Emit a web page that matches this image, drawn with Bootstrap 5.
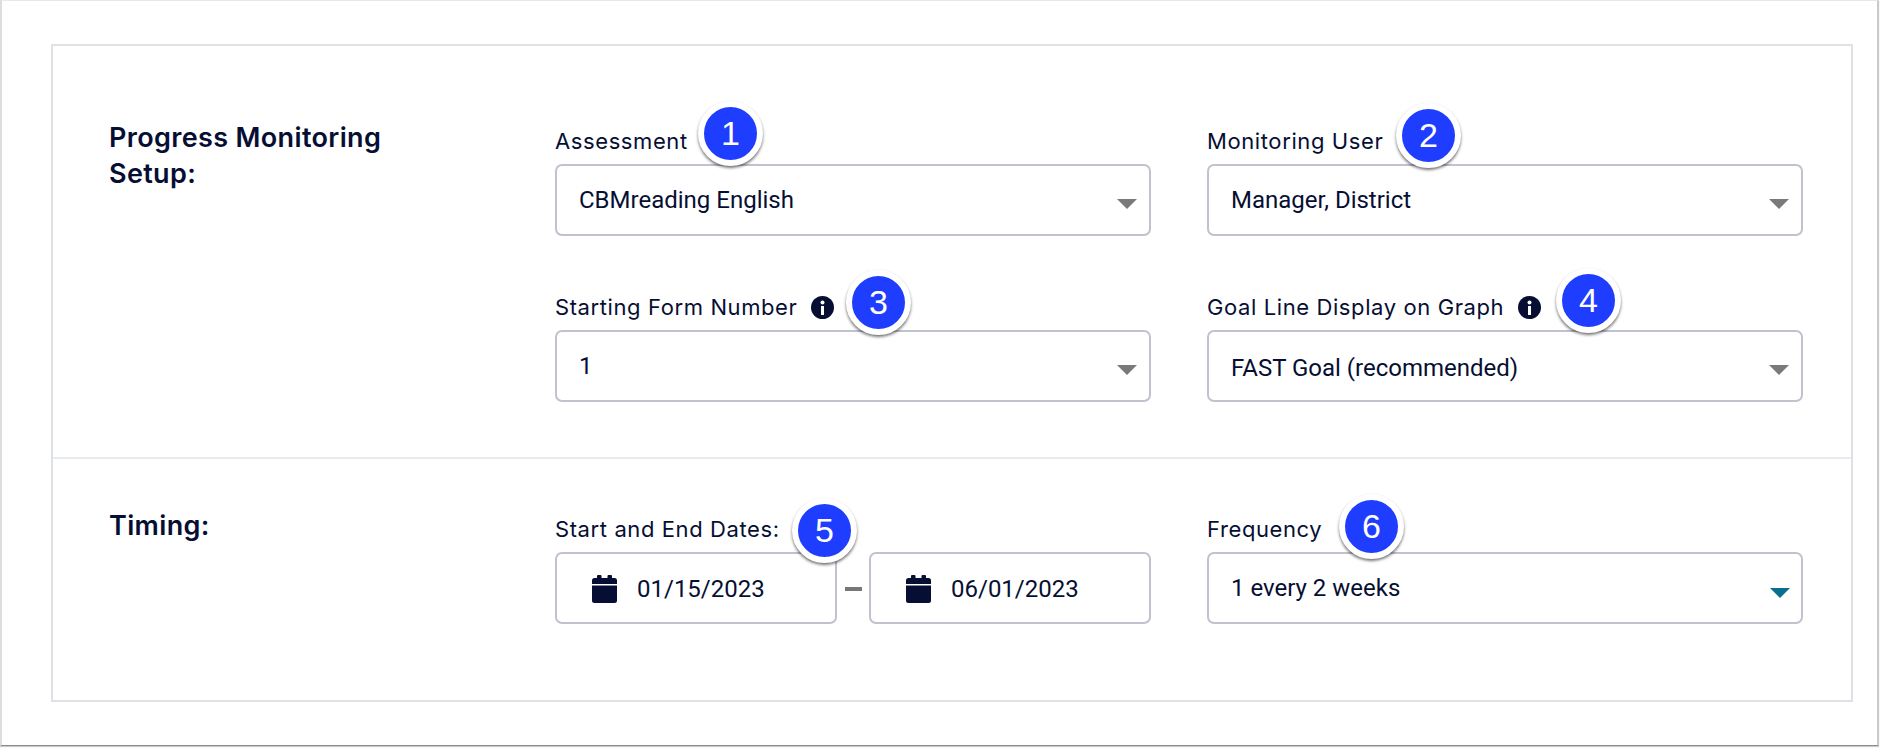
<!doctype html>
<html lang="en">
<head>
<meta charset="utf-8">
<title>Progress Monitoring Setup</title>
<link rel="stylesheet" href="https://cdn.jsdelivr.net/npm/bootstrap@5.3.0/dist/css/bootstrap.min.css">
<style>
html,body{background:#fff;margin:0;height:748px;overflow:hidden}
.pm-page{position:relative;width:1879px;height:746px;background:#fff;border-top:1px solid #e6e8eb;border-left:2px solid #dcdde0;border-right:2px solid #c9cacc;border-bottom:1px solid #8a8a8a;box-shadow:0 1px 1px rgba(0,0,0,.2);padding:43px 24px 0 49px;color:#060f33}
.pm-box{border:2px solid #dee2e6;height:658px;background:#fff}
.pm-sec{display:flex;padding-left:56px;padding-right:48px}
.pm-sec-a{height:413px;padding-top:82px;border-bottom:2px solid #e9ecef}
.pm-sec-b{padding-top:57px}
.pm-title{width:447px;margin:-8px 0 0;font-family:"Inter",sans-serif;font-weight:600;font-size:27px;line-height:36px;letter-spacing:.35px;color:#060f33}
.pm-fields{display:grid;grid-template-columns:596px 596px;column-gap:56px;row-gap:58px;align-self:flex-start}
.pm-lab{font-family:"Inter",sans-serif;font-size:22px;line-height:26px;letter-spacing:.6px;color:#060f33;margin:0 0 10px;display:flex;align-items:center;gap:14px;height:26px}
.pm-sel.form-select,.pm-date.form-control{height:72px;border:2px solid #c0c2d0;border-radius:7px;color:#060f33;font-family:"Roboto",sans-serif;font-size:24px;padding:0 40px 0 22px;box-shadow:none}
.pm-sel.form-select{background-image:url("data:image/svg+xml,%3Csvg xmlns='http://www.w3.org/2000/svg' viewBox='0 0 20 10'%3E%3Cpath fill='%237a7a7a' d='M0 0h20L10 10z'/%3E%3C/svg%3E");background-size:20px 10px;background-position:right 12px top 33px}
.pm-sel.pm-teal{background-image:url("data:image/svg+xml,%3Csvg xmlns='http://www.w3.org/2000/svg' viewBox='0 0 20 10'%3E%3Cpath fill='%230a6f8e' d='M0 0h20L10 10z'/%3E%3C/svg%3E");background-position:right 11px top 34px}
.pm-sel.form-select.pm-low{padding-top:3px}
.pm-range{display:flex;align-items:center}
.pm-date.form-control{width:282px;display:flex;align-items:center;gap:20px;padding:2px 0 0 35px;font-size:24px}
.pm-dash{width:32px;display:flex;justify-content:center;padding-top:2px}
.pm-dash i{display:block;width:17px;height:4px;background:#777}
.pm-dot{position:absolute;width:65px;height:65px;border-radius:50%;background:#1f3dff;border:6px solid #fff;box-shadow:0 2px 3px rgba(0,0,0,.55);color:#fff;font-family:"Liberation Sans",sans-serif;font-size:34px;line-height:53px;text-align:center}
</style>
</head>
<body>
<div class="pm-page">
  <div class="pm-box">
    <section class="pm-sec pm-sec-a">
      <h2 class="pm-title">Progress Monitoring<br>Setup:</h2>
      <div class="pm-fields">
        <div>
          <label class="pm-lab">Assessment</label>
          <select class="form-select pm-sel"><option>CBMreading English</option></select>
        </div>
        <div>
          <label class="pm-lab">Monitoring User</label>
          <select class="form-select pm-sel"><option>Manager, District</option></select>
        </div>
        <div>
          <label class="pm-lab">Starting Form Number
            <svg width="23" height="23" viewBox="0 0 23 23"><circle cx="11.500" cy="11.500" r="11.500" fill="#060f33"/><circle cx="11.500" cy="6.500" r="2" fill="#fff"/><path fill="#fff" d="M10 10h3v9h-3z"/></svg>
          </label>
          <select class="form-select pm-sel"><option>1</option></select>
        </div>
        <div>
          <label class="pm-lab">Goal Line Display on Graph
            <svg width="23" height="23" viewBox="0 0 23 23"><circle cx="11.500" cy="11.500" r="11.500" fill="#060f33"/><circle cx="11.500" cy="6.500" r="2" fill="#fff"/><path fill="#fff" d="M10 10h3v9h-3z"/></svg>
          </label>
          <select class="form-select pm-sel pm-low"><option>FAST Goal (recommended)</option></select>
        </div>
      </div>
    </section>
    <section class="pm-sec pm-sec-b">
      <h2 class="pm-title">Timing:</h2>
      <div class="pm-fields">
        <div>
          <label class="pm-lab">Start and End Dates:</label>
          <div class="pm-range">
            <div class="form-control pm-date">
              <svg width="25" height="28" viewBox="0 0 25 28"><path fill="#060f33" d="M6 0h2.500a1 1 0 0 1 1 1v2h6V1a1 1 0 0 1 1-1H19a1 1 0 0 1 1 1v2h2.500A2.500 2.500 0 0 1 25 5.500V9H0V5.500A2.500 2.500 0 0 1 2.500 3H5V1a1 1 0 0 1 1-1zM0 10.500h25V25.500A2.500 2.500 0 0 1 22.500 28H2.500A2.500 2.500 0 0 1 0 25.500z"/></svg>
              <span>01/15/2023</span>
            </div>
            <div class="pm-dash"><i></i></div>
            <div class="form-control pm-date">
              <svg width="25" height="28" viewBox="0 0 25 28"><path fill="#060f33" d="M6 0h2.500a1 1 0 0 1 1 1v2h6V1a1 1 0 0 1 1-1H19a1 1 0 0 1 1 1v2h2.500A2.500 2.500 0 0 1 25 5.500V9H0V5.500A2.500 2.500 0 0 1 2.500 3H5V1a1 1 0 0 1 1-1zM0 10.500h25V25.500A2.500 2.500 0 0 1 22.500 28H2.500A2.500 2.500 0 0 1 0 25.500z"/></svg>
              <span>06/01/2023</span>
            </div>
          </div>
        </div>
        <div>
          <label class="pm-lab">Frequency</label>
          <select class="form-select pm-sel pm-teal"><option>1 every 2 weeks</option></select>
        </div>
      </div>
    </section>
  </div>
  <span class="pm-dot" style="left:696px;top:100px">1</span>
  <span class="pm-dot" style="left:1394px;top:102px">2</span>
  <span class="pm-dot" style="left:844px;top:269px">3</span>
  <span class="pm-dot" style="left:1554px;top:267px">4</span>
  <span class="pm-dot" style="left:790px;top:497px">5</span>
  <span class="pm-dot" style="left:1337px;top:493px">6</span>
</div>
<script src="https://cdn.jsdelivr.net/npm/bootstrap@5.3.0/dist/js/bootstrap.bundle.min.js"></script>
</body>
</html>
